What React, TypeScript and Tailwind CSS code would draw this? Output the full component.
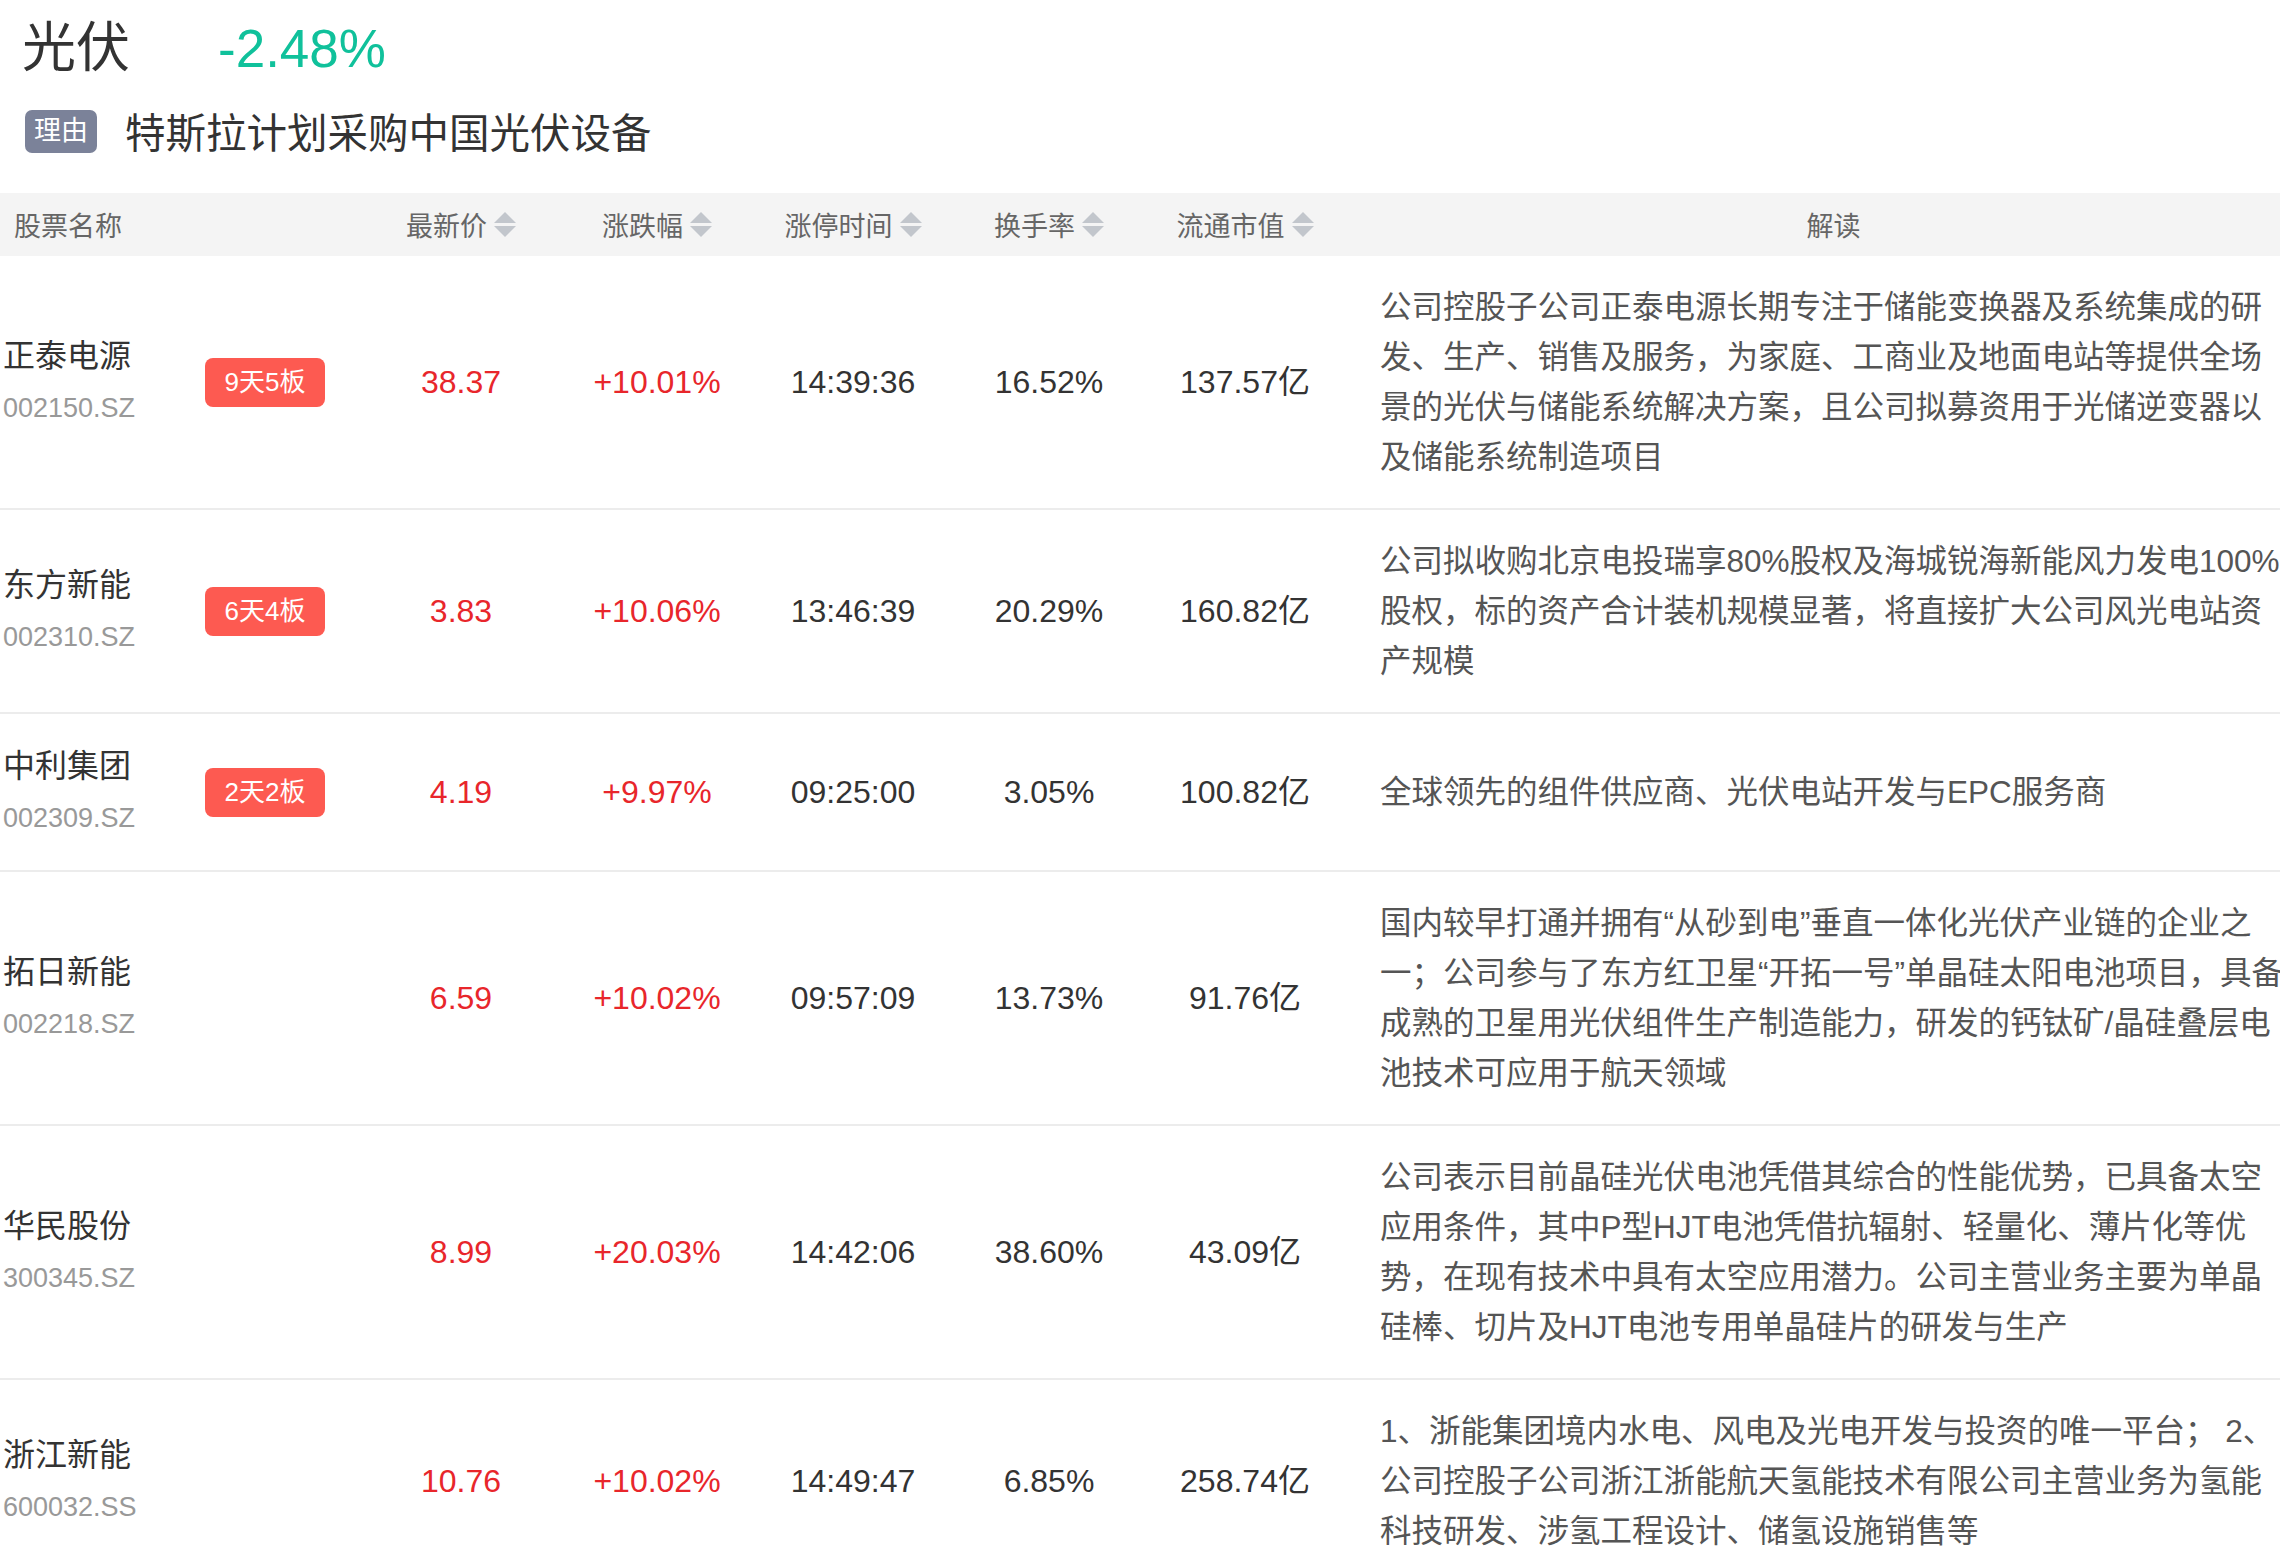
import React from 'react';

interface StockRow {
  name: string;
  code: string;
  board?: string;
  price: string;
  change: string;
  time: string;
  turnover: string;
  cap: string;
  desc: string[];
}

const rows: StockRow[] = [
  {
    name: '正泰电源',
    code: '002150.SZ',
    board: '9天5板',
    price: '38.37',
    change: '+10.01%',
    time: '14:39:36',
    turnover: '16.52%',
    cap: '137.57亿',
    desc: [
      '公司控股子公司正泰电源长期专注于储能变换器及系统集成的研',
      '发、生产、销售及服务，为家庭、工商业及地面电站等提供全场',
      '景的光伏与储能系统解决方案，且公司拟募资用于光储逆变器以',
      '及储能系统制造项目',
    ],
  },
  {
    name: '东方新能',
    code: '002310.SZ',
    board: '6天4板',
    price: '3.83',
    change: '+10.06%',
    time: '13:46:39',
    turnover: '20.29%',
    cap: '160.82亿',
    desc: [
      '公司拟收购北京电投瑞享80%股权及海城锐海新能风力发电100%',
      '股权，标的资产合计装机规模显著，将直接扩大公司风光电站资',
      '产规模',
    ],
  },
  {
    name: '中利集团',
    code: '002309.SZ',
    board: '2天2板',
    price: '4.19',
    change: '+9.97%',
    time: '09:25:00',
    turnover: '3.05%',
    cap: '100.82亿',
    desc: ['全球领先的组件供应商、光伏电站开发与EPC服务商'],
  },
  {
    name: '拓日新能',
    code: '002218.SZ',
    price: '6.59',
    change: '+10.02%',
    time: '09:57:09',
    turnover: '13.73%',
    cap: '91.76亿',
    desc: [
      '国内较早打通并拥有“从砂到电”垂直一体化光伏产业链的企业之',
      '一；公司参与了东方红卫星“开拓一号”单晶硅太阳电池项目，具备',
      '成熟的卫星用光伏组件生产制造能力，研发的钙钛矿/晶硅叠层电',
      '池技术可应用于航天领域',
    ],
  },
  {
    name: '华民股份',
    code: '300345.SZ',
    price: '8.99',
    change: '+20.03%',
    time: '14:42:06',
    turnover: '38.60%',
    cap: '43.09亿',
    desc: [
      '公司表示目前晶硅光伏电池凭借其综合的性能优势，已具备太空',
      '应用条件，其中P型HJT电池凭借抗辐射、轻量化、薄片化等优',
      '势，在现有技术中具有太空应用潜力。公司主营业务主要为单晶',
      '硅棒、切片及HJT电池专用单晶硅片的研发与生产',
    ],
  },
  {
    name: '浙江新能',
    code: '600032.SS',
    price: '10.76',
    change: '+10.02%',
    time: '14:49:47',
    turnover: '6.85%',
    cap: '258.74亿',
    desc: [
      '1、浙能集团境内水电、风电及光电开发与投资的唯一平台； 2、',
      '公司控股子公司浙江浙能航天氢能技术有限公司主营业务为氢能',
      '科技研发、涉氢工程设计、储氢设施销售等',
    ],
  },
];

const gridCols = 'grid grid-cols-[205px_158px_196px_196px_196px_196px_196px_1fr]';

function SortArrows() {
  return (
    <svg width="22" height="26" viewBox="0 0 22 26" className="ml-[7px] shrink-0">
      <polygon points="11,0 22,11 0,11" fill="#c2c6cc" />
      <polygon points="0,14 22,14 11,25" fill="#c2c6cc" />
    </svg>
  );
}

function SortHeader({ label }: { label: string }) {
  return (
    <div className="flex items-center justify-center">
      <span className="pt-[5px]">{label}</span>
      <SortArrows />
    </div>
  );
}

export default function App() {
  return (
    <div
      className="w-[2280px] h-[1568px] overflow-hidden bg-white text-[#333]"
      style={{ fontFamily: '"Liberation Sans", "Noto Sans CJK SC", sans-serif' }}
    >
      {/* Title */}
      <div className="h-[96px] flex items-center pl-[22px]">
        <span className="text-[54px] leading-none text-[#333]">光伏</span>
        <span className="ml-[88px] text-[53px] leading-none text-[#10c19b]">-2.48%</span>
      </div>

      {/* Reason */}
      <div className="h-[71px] flex items-center pl-[25px] mb-[26px]">
        <span className="w-[72px] h-[43px] rounded-[7px] bg-[#7b8299] text-white text-[27px] flex items-center justify-center">
          理由
        </span>
        <span className="ml-[28px] mt-[5px] text-[40.5px] leading-none text-[#333]">特斯拉计划采购中国光伏设备</span>
      </div>

      {/* Table header */}
      <div className={`${gridCols} h-[63px] items-center bg-[#f4f4f4] text-[27px] text-[#666]`}>
        <div className="col-span-2 pl-[14px] pt-[5px]">股票名称</div>
        <SortHeader label="最新价" />
        <SortHeader label="涨跌幅" />
        <SortHeader label="涨停时间" />
        <SortHeader label="换手率" />
        <SortHeader label="流通市值" />
        <div className="text-center pl-[44px] pt-[5px]">解读</div>
      </div>

      {/* Table rows */}
      {rows.map((row) => (
        <div key={row.code} className={`${gridCols} items-center border-b-2 border-[#ececec]`}>
          <div className="py-[26px] pl-[3px]">
            <div className="text-[32px] leading-[52px] text-[#333]">{row.name}</div>
            <div className="text-[27px] leading-[52px] text-[#999]">{row.code}</div>
          </div>
          <div>
            {row.board && (
              <span className="inline-flex w-[120px] h-[49px] rounded-[8px] bg-[#fd5a51] text-white text-[26px] items-center justify-center">
                {row.board}
              </span>
            )}
          </div>
          <div className="text-center text-[32px] text-[#e8262b]">{row.price}</div>
          <div className="text-center text-[32px] text-[#e8262b]">{row.change}</div>
          <div className="text-center text-[32px] text-[#333]">{row.time}</div>
          <div className="text-center text-[32px] text-[#333]">{row.turnover}</div>
          <div className="text-center text-[32px] text-[#333]">{row.cap}</div>
          <div className="py-[26px] pl-[37px] text-[31.5px] leading-[50px] text-[#555]">
            {row.desc.map((line, i) => (
              <div key={i} className="whitespace-nowrap">
                {line}
              </div>
            ))}
          </div>
        </div>
      ))}
    </div>
  );
}
